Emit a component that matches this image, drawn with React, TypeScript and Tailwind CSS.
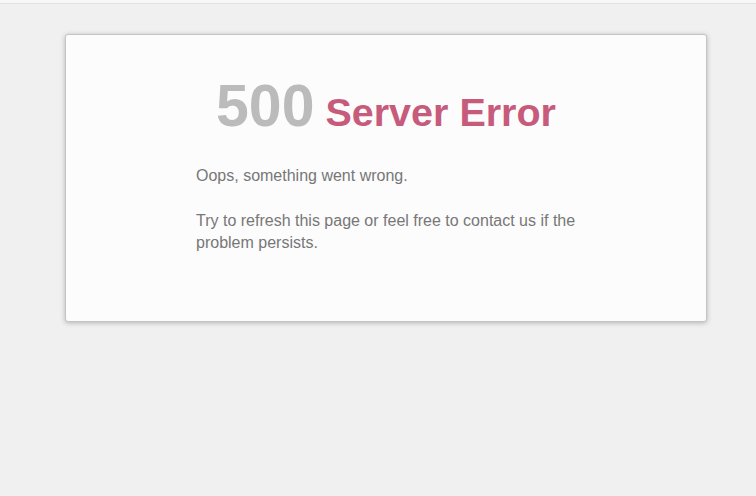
export default function App() {
  return (
    <div className="min-h-[496px] bg-[#f0f0f0] font-['Liberation_Sans',Arial,sans-serif]">
      <div className="h-[4px] bg-[#f7f7f7] border-b border-[#e2e2e2]" />
      <div className="px-[65px] pt-[30px]">
        <div className="w-[642px] h-[288px] bg-[#fcfcfc] border border-[#c4c4c4] rounded-[3px] shadow-[0_1px_5px_rgba(0,0,0,0.25)] pt-[36px]">
          <h1 className="text-center font-bold leading-[70px]">
            <span className="text-[59px] text-[#bbbbbb]">500</span>
            <span className="text-[39.5px] text-[#c75b7c]"> Server Error</span>
          </h1>
          <div className="w-[380px] mx-auto mt-[9px] text-[16px] leading-[22px] text-[#777777]">
            <p className="mb-[23px]">Oops, something went wrong.</p>
            <p>Try to refresh this page or feel free to contact us if the problem persists.</p>
          </div>
        </div>
      </div>
    </div>
  );
}
